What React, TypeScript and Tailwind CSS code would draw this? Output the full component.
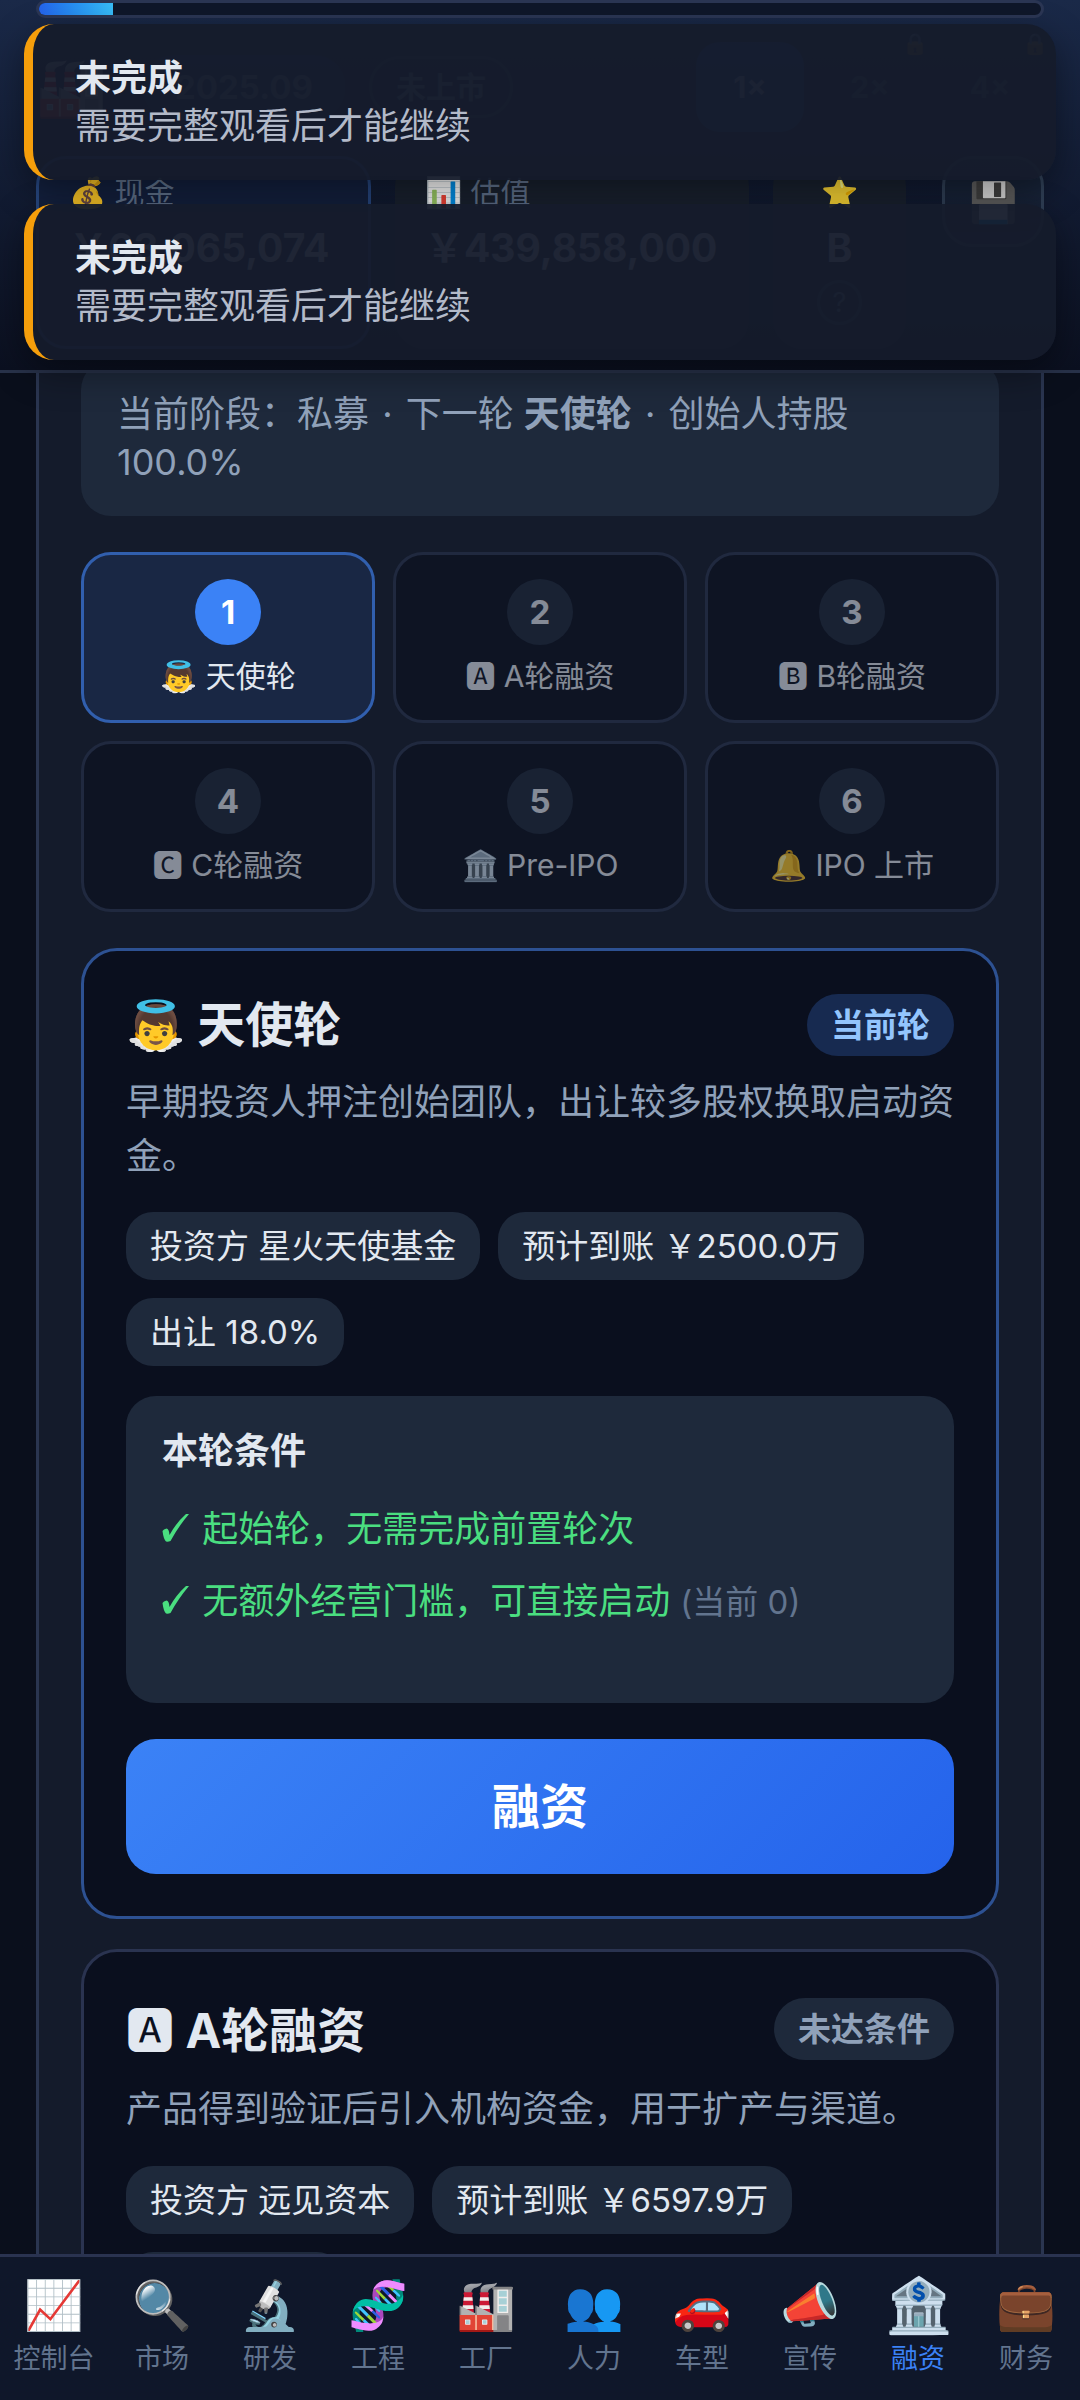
import type { ReactNode } from 'react';

const steps = [
  { icon: '👼', label: '天使轮' },
  { icon: '🅰', label: 'A轮融资' },
  { icon: '🅱', label: 'B轮融资' },
  { icon: '🅲', label: 'C轮融资' },
  { icon: '🏛️', label: 'Pre-IPO' },
  { icon: '🔔', label: 'IPO 上市' },
];

const tabs = [
  { icon: '📈', label: '控制台' },
  { icon: '🔍', label: '市场' },
  { icon: '🔬', label: '研发' },
  { icon: '🧬', label: '工程' },
  { icon: '🏭', label: '工厂' },
  { icon: '👥', label: '人力' },
  { icon: '🚗', label: '车型' },
  { icon: '📣', label: '宣传' },
  { icon: '🏦', label: '融资', active: true },
  { icon: '💼', label: '财务' },
];

function Toast() {
  return (
    <div
      role="status"
      className="rounded-[30px] border-l-[9px] border-[#f59e0b] bg-[#151b2b]/95 py-[30px] pr-6 pl-[42px] text-[36px] leading-[48px] shadow-[0_12px_36px_rgba(0,0,0,0.4)]"
    >
      <div className="font-bold text-slate-200">未完成</div>
      <div className="text-[#b3bac9]">需要完整观看后才能继续</div>
    </div>
  );
}

function Chip({ children }: { children: ReactNode }) {
  return <span className="rounded-[27px] bg-[#1e293b] px-6 text-[33px] leading-[68px] text-slate-200">{children}</span>;
}

function Check() {
  return (
    <svg viewBox="0 0 27 28" className="mr-[3px] inline h-7 w-[27px] align-baseline" fill="currentColor" aria-hidden="true">
      <path d="M0.5 17Q1.5 15 4.5 14.5Q7 14.5 7.5 21Q14 9 24 0H27Q16 13 8.5 27Q6 28 4 27.5Q1.5 25 0.5 17Z" />
    </svg>
  );
}

function Speed({ label, active }: { label: string; active?: boolean }) {
  return (
    <button
      className={
        'relative h-[90px] w-[108px] rounded-[24px] ' + (active ? 'bg-[#3b82f6]/35 text-slate-400' : 'text-slate-600')
      }
    >
      {label}
      {!active && <span className="absolute -top-3 -right-1 text-[21px] leading-[27px] opacity-50">🔒</span>}
    </button>
  );
}

function Header() {
  return (
    <header className="border-b-[3px] border-[#28324a] bg-linear-to-b from-[#1a2948] to-[#0b1020] px-9 pb-[21px]">
      <div className="h-[18px] overflow-hidden rounded-full border-[3px] border-[#2b3654] bg-[#0f172a]">
        <div className="h-full w-[7.4%] bg-linear-to-r from-[#2563eb] to-[#38bdf8]" />
      </div>

      <div className="mt-6 flex h-[90px] items-center leading-[48px]">
        <span className="text-[57px]">🏭</span>
        <span className="ml-9 rounded-[30px] bg-[#3b82f6]/15 px-8 py-2 text-[33px] font-bold text-slate-500">2025.09</span>
        <span className="ml-6 rounded-full border-[3px] border-slate-700 px-6 py-1 text-[30px] font-bold text-slate-500">未上市</span>
        <div className="ml-auto flex gap-3 text-[30px] font-bold">
          <Speed label="1×" active />
          <Speed label="2×" />
          <Speed label="4×" />
        </div>
      </div>

      <div className="mt-6 grid h-[193px] grid-cols-[335fr_354fr_133px_114px] gap-6 leading-[48px]">
        <div className="rounded-[30px] border-[3px] border-[#274780] bg-[#14213f] px-[30px] pt-[9px]">
          <div className="text-[30px] text-slate-500">💰 现金</div>
          <div className="mt-2 text-[39px] font-bold text-slate-300">￥63,065,074</div>
        </div>
        <div className="rounded-[30px] bg-[#1a2230] px-[30px] pt-3">
          <div className="text-[30px] text-slate-500">📊 估值</div>
          <div className="mt-2 text-[39px] font-bold text-slate-300">￥439,858,000</div>
        </div>
        <div className="flex flex-col items-center rounded-[30px] bg-[#1a2230] pt-3">
          <div className="text-[30px]">⭐</div>
          <div className="mt-2 text-[39px] font-bold text-slate-300">B</div>
          <button className="mt-2 size-[45px] rounded-full border-[3px] border-slate-700 text-[27px] leading-[39px] text-slate-500">
            ?
          </button>
        </div>
        <button className="ml-3 h-[91px] rounded-[30px] border-[3px] border-slate-700 bg-slate-800/60 text-[39px]">💾</button>
      </div>
    </header>
  );
}

export default function App() {
  return (
    <div className="relative flex h-screen flex-col overflow-hidden bg-[#0a0f1c] font-[Inter,'Noto_Sans_CJK_SC',sans-serif] text-slate-200">
      <Header />

      <div className="absolute inset-x-6 top-6 flex flex-col gap-6">
        <Toast />
        <Toast />
      </div>

      <main className="min-h-0 flex-1 overflow-hidden px-9">
        <div className="border-x-[3px] border-[#2a3550] bg-[#141b2b] px-[42px]">
          <p className="-mt-[13px] rounded-[30px] bg-[#1e293b] px-9 py-[30px] text-[36px] leading-[48px] text-slate-400">
            当前阶段：私募 <span className="px-[3px]">·</span> 下一轮 <strong>天使轮</strong>{' '}
            <span className="px-[3px]">·</span> 创始人持股
            <br />
            100.0%
          </p>

          <div className="mt-9 grid grid-cols-3 gap-[18px]">
            {steps.map((s, i) => (
              <button
                key={s.label}
                className={
                  'flex flex-col items-center rounded-[30px] border-[3px] pt-6 pb-[21px] ' +
                  (i === 0 ? 'border-[#315fae] bg-[#192744]' : 'border-[#2a3550] bg-[#0a0f1e] opacity-55')
                }
              >
                <span
                  className={
                    'size-[66px] rounded-full text-[33px] leading-[66px] font-bold ' +
                    (i === 0 ? 'bg-[#3b82f6] text-white' : 'bg-[#1e293b]')
                  }
                >
                  {i + 1}
                </span>
                <span className="mt-[9px] text-[30px] leading-[45px]">
                  {s.icon} {s.label}
                </span>
              </button>
            ))}
          </div>

          <section className="mt-9 rounded-[36px] border-[3px] border-[#2d5192] bg-[#0a0f1e] p-[42px]">
            <div className="flex items-center justify-between">
              <h2 className="text-[48px] leading-[64px] font-bold">👼 天使轮</h2>
              <span className="rounded-full bg-[#172a50] px-6 text-[33px] leading-[62px] font-bold text-[#93c5fd]">当前轮</span>
            </div>
            <p className="mt-[18px] text-[36px] leading-[54px] text-slate-400">
              早期投资人押注创始团队，出让较多股权换取启动资金。
            </p>
            <div className="mt-[29px] flex flex-wrap gap-[18px]">
              <Chip>投资方 星火天使基金</Chip>
              <Chip>预计到账 ￥2500.0万</Chip>
              <Chip>出让 18.0%</Chip>
            </div>
            <div className="mt-[30px] rounded-[30px] bg-[#1e293b] px-9 pt-7 pb-[74px] text-[36px] leading-[54px]">
              <h3 className="font-bold">本轮条件</h3>
              <ul className="mt-6 flex flex-col gap-[18px] text-[#4ade80]">
                <li>
                  <Check /> 起始轮，无需完成前置轮次
                </li>
                <li>
                  <Check /> 无额外经营门槛，可直接启动 <span className="text-[33px] text-slate-500">(当前 0)</span>
                </li>
              </ul>
            </div>
            <button className="mt-9 h-[135px] w-full rounded-[30px] bg-linear-135 from-[#3b82f6] to-[#2563eb] text-[48px] font-bold text-white">
              融资
            </button>
          </section>

          <section className="mt-[30px] rounded-[36px] border-[3px] border-[#2a3350] bg-[#0a0f1e] p-[42px]">
            <div className="flex items-center justify-between">
              <h2 className="pt-1 text-[48px] leading-[66px] font-bold">
                <span className="font-normal">🅰</span> A轮融资
              </h2>
              <span className="rounded-full bg-[#1e293b] px-6 text-[33px] leading-[62px] font-bold text-slate-400">未达条件</span>
            </div>
            <p className="mt-[18px] text-[36px] leading-[54px] text-slate-400">
              产品得到验证后引入机构资金，用于扩产与渠道。
            </p>
            <div className="mt-[30px] flex flex-wrap gap-[18px]">
              <Chip>投资方 远见资本</Chip>
              <Chip>预计到账 ￥6597.9万</Chip>
              <Chip>出让 15.0%</Chip>
            </div>
          </section>
        </div>
      </main>

      <nav className="flex border-t-[3px] border-[#2a3350] bg-[#0f172a] pt-[15px] pb-5">
        {tabs.map((t) => (
          <a key={t.label} href="#" className="flex flex-1 flex-col items-center">
            <span className={'h-[66px] leading-[66px] ' + (t.active ? 'text-[54px]' : 'text-[48px]')}>{t.icon}</span>
            <span className={'text-[27px] leading-[42px] ' + (t.active ? 'text-[#3b82f6]' : 'text-slate-500')}>{t.label}</span>
          </a>
        ))}
      </nav>
    </div>
  );
}
